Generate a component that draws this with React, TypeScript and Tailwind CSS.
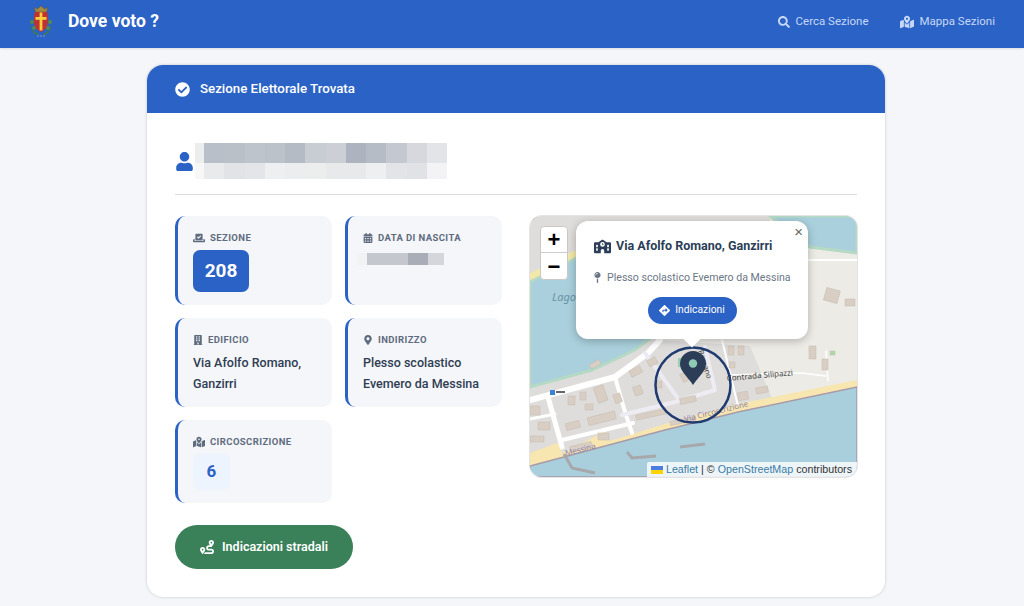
import React from 'react';
import {
  FaSearch, FaMapMarkedAlt, FaCheckCircle, FaUser, FaVoteYea, FaCalendarAlt,
  FaBuilding, FaMapMarkerAlt, FaRoute, FaMapPin, FaDirections,
} from 'react-icons/fa';
import { FaSchool } from 'react-icons/fa6';

const font = "font-['Roboto',sans-serif]";

const Logo = () => (
  <svg width="24" height="33" viewBox="0 0 24 33">
    {/* corona */}
    <path d="M6.5 7 L5.5 2.5 L8.5 4 L12 1 L15.5 4 L18.5 2.5 L17.5 7 Z" fill="#a58a3f" stroke="#6f5a28" strokeWidth="0.5" />
    {/* corona d'alloro */}
    <path d="M4 10 C0 15 0 23 6 27 L10 29 L8 30 C1 27 -1.5 16 4 10 Z" fill="#3d7d48" />
    <path d="M20 10 C24 15 24 23 18 27 L14 29 L16 30 C23 27 25.5 16 20 10 Z" fill="#3d7d48" />
    <circle cx="3" cy="17" r="2" fill="#56894f" />
    <circle cx="21" cy="17" r="2" fill="#56894f" />
    <circle cx="5" cy="23" r="2" fill="#56894f" />
    <circle cx="19" cy="23" r="2" fill="#56894f" />
    {/* scudo */}
    <path d="M6 7 H18 C19.5 11 19.5 19 17 23 C15.5 25 13.5 26 12 27 C10.5 26 8.5 25 7 23 C4.5 19 4.5 11 6 7 Z" fill="#c2302f" />
    <rect x="10.6" y="7.5" width="2.8" height="18" fill="#f6cf3f" />
    <rect x="6.5" y="12" width="11" height="2.8" fill="#f6cf3f" />
    <path d="M8 31 H16" stroke="#7f9bc9" strokeWidth="1.2" strokeDasharray="2 1" />
  </svg>
);

const MapArt = () => (
  <svg className="absolute inset-0 h-full w-full" viewBox="0 0 327 261">
    <rect width="327" height="261" fill="#ecebe6" />
    {/* zona abitata */}
    <path d="M0 0 H240 V30 H0 Z M0 30 H130 L128 124 L220 130 L243 185 L100 225 L0 250 Z" fill="#dedddb" />
    {/* laguna */}
    <path d="M0 66 L46 42 L150 30 L135 112 L118 124 L105 134 L62 154 L0 171 Z" fill="#a9d0dc" stroke="#b4d9c4" strokeWidth="3" />
    <path d="M240 0 H327 V37 L280 31 Z" fill="#a9d0dc" stroke="#b4d9c4" strokeWidth="3" />
    <path d="M0 61 L46 37" stroke="#f3e8a8" strokeWidth="6" fill="none" />
    <path d="M278 44 H327" stroke="#fff" strokeWidth="2" />
    <path d="M0 0 H8 L0 6 Z" fill="#c0392b" />
    {/* spiaggia e mare */}
    <path d="M0 237 L30 226 L32 238 L75 215 L80 225 L135 208 L208 188 L327 164 V172 L208 197 L135 215 L0 252 Z" fill="#f8e6b0" />
    <path d="M0 250 L135 214 L208 196 L327 171 V261 H0 Z" fill="#a9cfdc" stroke="#a99aa8" strokeWidth="1.5" />
    {/* strade */}
    <g stroke="#fff" fill="none" strokeLinecap="round" strokeLinejoin="round">
      <path d="M0 184 L85 161 L118 137 L130 124" strokeWidth="6" />
      <path d="M85 161 L95 196 L102 217" strokeWidth="4" />
      <path d="M92 199 L145 186 L185 174 L175 131" strokeWidth="4" stroke="#eeecf2" />
      <path d="M18 181 L32 231" strokeWidth="5" />
      <path d="M32 224 L103 207" strokeWidth="4" />
      <path d="M0 203 L25 198" strokeWidth="3" />
      <path d="M115 137 L147 181" strokeWidth="4" stroke="#eceaf2" />
      <path d="M192 124 L208 190" strokeWidth="2" />
      <path d="M198 159 L272 157 L296 160" strokeWidth="1.5" />
      <path d="M296 135 L298 165" strokeWidth="1.5" />
    </g>
    {/* edifici */}
    <g fill="#d8cec3" stroke="#c6bbae" strokeWidth="0.5">
      <rect x="100" y="152" width="12" height="7" transform="rotate(-28 106 156)" />
      <rect x="118" y="142" width="9" height="7" transform="rotate(-28 123 146)" />
      <rect x="104" y="170" width="8" height="9" transform="rotate(-20 108 175)" />
      <rect x="125" y="165" width="7" height="7" />
      <rect x="66" y="170" width="10" height="16" transform="rotate(-20 71 179)" />
      <rect x="38" y="180" width="7" height="9" />
      <rect x="50" y="176" width="6" height="8" />
      <rect x="58" y="198" width="28" height="8" transform="rotate(-14 73 203)" />
      <rect x="8" y="206" width="12" height="8" />
      <rect x="0" y="190" width="10" height="9" />
      <rect x="36" y="206" width="14" height="7" transform="rotate(-14 43 210)" />
      <rect x="40" y="228" width="22" height="6" transform="rotate(-14 51 231)" />
      <rect x="68" y="217" width="11" height="7" />
      <rect x="0" y="220" width="14" height="6" />
      <rect x="84" y="178" width="7" height="9" transform="rotate(-20 87 182)" />
      <rect x="55" y="188" width="8" height="6" />
      <rect x="150" y="181" width="16" height="6" transform="rotate(-12 158 184)" />
      <rect x="106" y="196" width="30" height="5" transform="rotate(-12 121 199)" />
      <rect x="140" y="203" width="26" height="4" transform="rotate(-12 153 205)" />
      <rect x="150" y="152" width="26" height="9" transform="rotate(-28 163 156)" />
      <rect x="198" y="130" width="6" height="9" />
      <rect x="208" y="130" width="6" height="9" />
      <rect x="199" y="146" width="6" height="6" />
      <rect x="208" y="176" width="10" height="8" transform="rotate(-10 213 180)" />
      <rect x="226" y="171" width="12" height="6" transform="rotate(-10 232 174)" />
      <rect x="279" y="130" width="7" height="13" />
      <rect x="292" y="143" width="6" height="11" />
      <rect x="295" y="73" width="14" height="13" transform="rotate(15 302 79)" />
      <rect x="315" y="83" width="10" height="7" />
      <rect x="60" y="146" width="11" height="5" transform="rotate(-28 65 149)" />
      <rect x="15" y="22" width="14" height="6" />
      <rect x="300" y="135" width="5" height="4" fill="#a9d9a7" />
    </g>
    <path d="M34 238 L42 252 L65 257" stroke="#a7a8ac" strokeWidth="3" fill="none" />
    <path d="M97 236 L102 242 L126 240" stroke="#a7a8ac" strokeWidth="3" fill="none" />
    <path d="M150 231 L175 228" stroke="#a7a8ac" strokeWidth="3" fill="none" />
    <rect x="20" y="174" width="5" height="5" fill="#3b82d6" />
    <path d="M26 176 H35" stroke="#333" strokeWidth="1.5" />
    <rect x="148" y="142" width="8" height="9" fill="#9ccfae" />
    {/* testi mappa */}
    <g fontFamily="'Noto Sans',sans-serif">
      <text x="22" y="85" fontSize="11" fontStyle="italic" fill="#6c93a5">Lago</text>
      <text x="197" y="165" fontSize="8" fill="#444" transform="rotate(-5 197 165)">Contrada Silipazzi</text>
      <text x="168" y="135" fontSize="7.5" fill="#444" transform="rotate(72 168 135)">Romano</text>
      <text x="155" y="206" fontSize="8" fill="#8d83a8" transform="rotate(-14 155 206)">Via Circoscrizione</text>
      <text x="36" y="240" fontSize="8" fill="#8d83a8" transform="rotate(-14 36 240)">Messina</text>
    </g>
    {/* marker */}
    <circle cx="163" cy="169" r="37.5" fill="none" stroke="#1f3b6f" strokeWidth="2.5" />
    <path d="M163 169 C157 160 150 155 150 148 A13 13 0 0 1 176 148 C176 155 169 160 163 169 Z" fill="#2c3e57" />
    <circle cx="163" cy="147.5" r="4.2" fill="#8fcbb5" />
  </svg>
);

const cell = "rounded-[10px] border-l-[3px] border-[#2b62c5] bg-[#f4f6f9] pl-[15px] pr-2";
const label = "flex items-center gap-[5px] text-[9.5px] font-bold uppercase leading-[12px] tracking-[0.4px] text-[#5f6b7e]";
const value = "mt-[6px] text-[12.5px] font-medium leading-[21px] text-[#2f3d52]";

const nameTop = ['bg-[#b8bfc8]', 'bg-[#b9c0c8]', 'bg-[#bec4cb]', 'bg-[#bcc2ca]', 'bg-[#b5bbc4]', 'bg-[#c8cdd4]', 'bg-[#ccd0d6]', 'bg-[#aeb4bf]', 'bg-[#b6bcc6]', 'bg-[#c4c9d1]', 'bg-[#d6d8dd]', 'bg-[#e3e4e8]'];
const nameBottom = ['bg-[#e9eaec]', 'bg-[#e2e3e6]', 'bg-[#e4e5e8]', 'bg-[#eeeff1]', 'bg-[#ecedef]', 'bg-[#eceded]', 'bg-[#e8e9eb]', 'bg-[#e8e9eb]', 'bg-[#eeeff1]', 'bg-[#e3e4e7]', 'bg-[#e1e2e5]', 'bg-[#f3f3f5]'];

export default function App() {
  return (
    <div className={`${font} min-h-screen bg-[#f4f6f9]`}>
      <header className="flex h-[48px] items-center justify-between bg-[#2b62c5] pb-[5px] pl-[29px] pr-[29px] shadow-[0_1px_2px_rgba(0,0,0,0.1)]">
        <div className="flex items-center gap-[15px]">
          <Logo />
          <span className="text-[17.5px] font-bold text-white">Dove voto ?</span>
        </div>
        <nav className="flex items-center gap-[31px] text-[11.5px] text-[#c6d8f6]">
          <a className="flex items-center gap-[6px]"><FaSearch size={12} />Cerca Sezione</a>
          <a className="flex items-center gap-[6px]"><FaMapMarkedAlt size={14} />Mappa Sezioni</a>
        </nav>
      </header>

      <main className="pt-[17px]">
        <section className="ml-[147px] w-[738px] overflow-hidden rounded-[16px] bg-white shadow-[0_0_3px_rgba(0,0,0,0.2)]">
          <div className="flex h-[48px] items-center gap-[10px] bg-[#2b62c5] pl-[28px] text-[13.3px] font-medium text-white">
            <FaCheckCircle size={15} />
            Sezione Elettorale Trovata
          </div>
          <div className="px-[28px] pb-[28px] pt-[30px]">
            <div className="flex items-center gap-[1px] border-b border-[#dcdcdc] pb-[15px]">
              <FaUser size={19} className="text-[#2b62c5]" />
              <div className="flex flex-col">
                <div className="flex h-[20px] w-[252px]">
                  <div className="h-full w-[9px] bg-[#eceded]" />
                  {nameTop.map((c, i) => <div key={i} className={`${c} h-full flex-1`} />)}
                </div>
                <div className="flex h-[16px] w-[252px]">
                  <div className="h-full w-[9px] bg-[#f7f7f8]" />
                  {nameBottom.map((c, i) => <div key={i} className={`${c} h-full flex-1`} />)}
                </div>
              </div>
            </div>

            <div className="mt-[21px] grid grid-cols-2 gap-[28px]">
              <div>
                <div className="grid grid-cols-2 gap-[13px]">
                  <div className={`${cell} h-[89px] pt-[16px]`}>
                    <div className={label}><FaVoteYea size={12} />Sezione</div>
                    <div className="mt-[6px] flex h-[42px] w-[56px] items-center justify-center rounded-[7px] bg-[#2b62c5] text-[19px] font-bold text-white">208</div>
                  </div>
                  <div className={`${cell} h-[89px] pt-[16px]`}>
                    <div className={label}><FaCalendarAlt size={10} />Data di nascita</div>
                    <div className="-ml-[6px] mt-[9px] flex h-[12px]">
                      <div className="h-full w-[10px] bg-[#f1f2f4]" />
                      <div className="h-full w-[41px] bg-[#c4c7ce]" />
                      <div className="h-full w-[20px] bg-[#a9adb7]" />
                      <div className="h-full w-[16px] bg-[#d4d6db]" />
                    </div>
                  </div>
                  <div className={`${cell} h-[89px] pt-[16px]`}>
                    <div className={label}><FaBuilding size={10} />Edificio</div>
                    <div className={value}>Via Afolfo Romano, Ganzirri</div>
                  </div>
                  <div className={`${cell} h-[89px] pt-[16px]`}>
                    <div className={label}><FaMapMarkerAlt size={10} />Indirizzo</div>
                    <div className={value}>Plesso scolastico Evemero da Messina</div>
                  </div>
                  <div className={`${cell} h-[83px] pt-[16px]`}>
                    <div className={label}><FaMapMarkedAlt size={12} />Circoscrizione</div>
                    <div className="mt-[5px] flex h-[37px] w-[37px] items-center justify-center rounded-[7px] bg-[#eef4fd] text-[17px] font-bold text-[#2b62c5]">6</div>
                  </div>
                </div>
                <button className="mt-[22px] flex h-[44px] w-[178px] items-center justify-center gap-[8px] rounded-[22px] bg-[#3a8058] text-[12.5px] font-semibold text-white">
                  <FaRoute size={14} />
                  Indicazioni stradali
                </button>
              </div>

              <div className="relative h-[261px] overflow-hidden rounded-[12px] shadow-[0_0_0_1px_#e3e3e3]">
                <MapArt />
                <div className="absolute left-[10px] top-[10px] flex w-[28px] flex-col overflow-hidden rounded-[4px] border border-[#c9c9c9] bg-white font-['Liberation_Sans',sans-serif] text-[22px] font-bold text-black">
                  <span className="flex h-[26px] items-center justify-center border-b border-[#ccc]">+</span>
                  <span className="flex h-[26px] items-center justify-center">−</span>
                </div>
                <div className="absolute left-[46px] top-[5px] h-[118px] w-[232px] rounded-[12px] bg-white shadow-[0_2px_8px_rgba(0,0,0,0.25)]">
                  <span className="absolute right-[5px] top-[0px] font-['Liberation_Sans',sans-serif] text-[15px] text-[#666]">×</span>
                  <div className="flex items-center gap-[5px] pl-[18px] pt-[16px] text-[12.5px] font-bold text-[#2c3e57]">
                    <FaSchool size={17} />
                    Via Afolfo Romano, Ganzirri
                  </div>
                  <div className="mt-[14px] flex items-center gap-[4px] pl-[16px] text-[10.6px] text-[#6b7686]">
                    <FaMapPin size={11} />
                    Plesso scolastico Evemero da Messina
                  </div>
                  <button className="mx-auto mt-[11px] flex h-[27px] w-[89px] items-center justify-center gap-[5px] rounded-[14px] bg-[#2b62c5] text-[10.3px] font-normal text-white">
                    <FaDirections size={11} />
                    Indicazioni
                  </button>
                  <span className="absolute -bottom-[6px] left-[110px] h-[12px] w-[12px] rotate-45 bg-white" />
                </div>
                <div className="absolute bottom-0 right-0 flex h-[15px] items-center gap-[3px] rounded-tl-[2px] bg-white/80 pl-[4px] pr-[5px] font-['Liberation_Sans',sans-serif] text-[10.7px] text-[#333]">
                  <span className="flex h-[8px] w-[12px] flex-col">
                    <span className="h-1/2 bg-[#4c7be1]" />
                    <span className="h-1/2 bg-[#ffd500]" />
                  </span>
                  <span className="text-[#3a7ca5]">Leaflet</span> | © <span className="text-[#3a7ca5]">OpenStreetMap</span> contributors
                </div>
              </div>
            </div>
          </div>
        </section>
      </main>
    </div>
  );
}
